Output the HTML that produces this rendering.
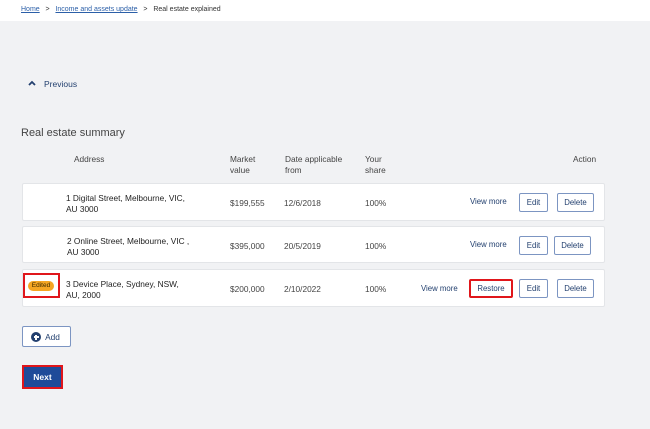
<!DOCTYPE html>
<html><head><meta charset="utf-8"><style>
*{margin:0;padding:0;box-sizing:border-box}
body{width:650px;height:429px;background:#f1f2f4;font-family:"Liberation Sans",sans-serif;position:relative;overflow:hidden;color:#222}
.a{position:absolute}
.hdr{left:0;top:0;width:650px;height:21px;background:#fff}
.bc{font-size:7px;top:6px;color:#333}
.bc a{color:#2b5fa8;text-decoration:underline}
.card{left:22px;width:583px;background:#fff;border:1px solid #e3e5e8;border-radius:2px}
.t{font-size:8.3px;line-height:11px;color:#222}
.btn{border:1.5px solid #7c95c2;border-radius:2px;background:#fff;color:#23406f;font-size:7.8px;height:19px;display:flex;align-items:center;justify-content:center}
.vm{font-size:7.8px;color:#23406f}
</style></head><body>
<div class="a hdr"></div>
<div class="a bc" style="left:21px"><a>Home</a> &nbsp;&nbsp;&gt;&nbsp;&nbsp; <a>Income and assets update</a> &nbsp;&nbsp;&gt;&nbsp;&nbsp; Real estate explained</div>
<svg class="a" style="left:28px;top:80px" width="8" height="6" viewBox="0 0 8 6"><path d="M1 5 L4 2 L7 5" stroke="#23406f" stroke-width="1.8" fill="none"/></svg>
<div class="a" style="left:44px;top:79px;font-size:8.5px;color:#23406f">Previous</div>
<div class="a" style="left:21px;top:127px;font-size:11px;color:#444">Real estate summary</div>
<div class="a t" style="left:74px;top:154px;color:#444">Address</div>
<div class="a t" style="left:230px;top:154px;color:#444">Market<br>value</div>
<div class="a t" style="left:285px;top:154px;color:#444">Date applicable<br>from</div>
<div class="a t" style="left:365px;top:154px;color:#444">Your<br>share</div>
<div class="a t" style="left:573px;top:154px;color:#444">Action</div>

<div class="a card" style="top:183px;height:38px"></div>
<div class="a t" style="left:66px;top:193px">1 Digital Street, Melbourne, VIC,<br>AU 3000</div>
<div class="a t" style="left:230px;top:198px;color:#444">$199,555</div>
<div class="a t" style="left:284px;top:198px;color:#444">12/6/2018</div>
<div class="a t" style="left:365px;top:198px;color:#444">100%</div>
<div class="a vm" style="left:470px;top:197px">View more</div>
<div class="a btn" style="left:519px;top:193px;width:29px">Edit</div>
<div class="a btn" style="left:557px;top:193px;width:37px">Delete</div>

<div class="a card" style="top:226px;height:37px"></div>
<div class="a t" style="left:67px;top:236px">2 Online Street, Melbourne, VIC ,<br>AU 3000</div>
<div class="a t" style="left:230px;top:241px;color:#444">$395,000</div>
<div class="a t" style="left:284px;top:241px;color:#444">20/5/2019</div>
<div class="a t" style="left:365px;top:241px;color:#444">100%</div>
<div class="a vm" style="left:470px;top:240px">View more</div>
<div class="a btn" style="left:519px;top:236px;width:29px">Edit</div>
<div class="a btn" style="left:554px;top:236px;width:37px">Delete</div>

<div class="a card" style="top:269px;height:38px"></div>
<div class="a" style="left:23px;top:273px;width:37px;height:25px;border:2px solid #e0161b"></div>
<div class="a" style="left:28px;top:281px;width:26px;height:10px;background:#f5a623;border-radius:5px;font-size:6.5px;line-height:10px;text-align:center;color:#3a2a00">Edited</div>
<div class="a t" style="left:66px;top:279px">3 Device Place, Sydney, NSW,<br>AU, 2000</div>
<div class="a t" style="left:230px;top:284px;color:#444">$200,000</div>
<div class="a t" style="left:284px;top:284px;color:#444">2/10/2022</div>
<div class="a t" style="left:365px;top:284px;color:#444">100%</div>
<div class="a vm" style="left:421px;top:284px">View more</div>
<div class="a btn" style="left:469px;top:279px;width:44px;border:2px solid #e0161b">Restore</div>
<div class="a btn" style="left:519px;top:279px;width:29px">Edit</div>
<div class="a btn" style="left:557px;top:279px;width:37px">Delete</div>

<div class="a btn" style="left:22px;top:326px;width:49px;height:21px;font-size:8.3px;padding-left:12px">Add</div>
<div class="a" style="left:31px;top:332px;width:10px;height:10px;border-radius:50%;background:#23406f"></div>
<div class="a" style="left:33.5px;top:336.3px;width:5px;height:1.5px;background:#fff"></div>
<div class="a" style="left:35.25px;top:334.5px;width:1.5px;height:5px;background:#fff"></div>

<div class="a" style="left:22px;top:365px;width:41px;height:24px;border:2px solid #e0161b;background:#1f4b99;color:#fff;font-size:8.5px;font-weight:bold;display:flex;align-items:center;justify-content:center">Next</div>
</body></html>
